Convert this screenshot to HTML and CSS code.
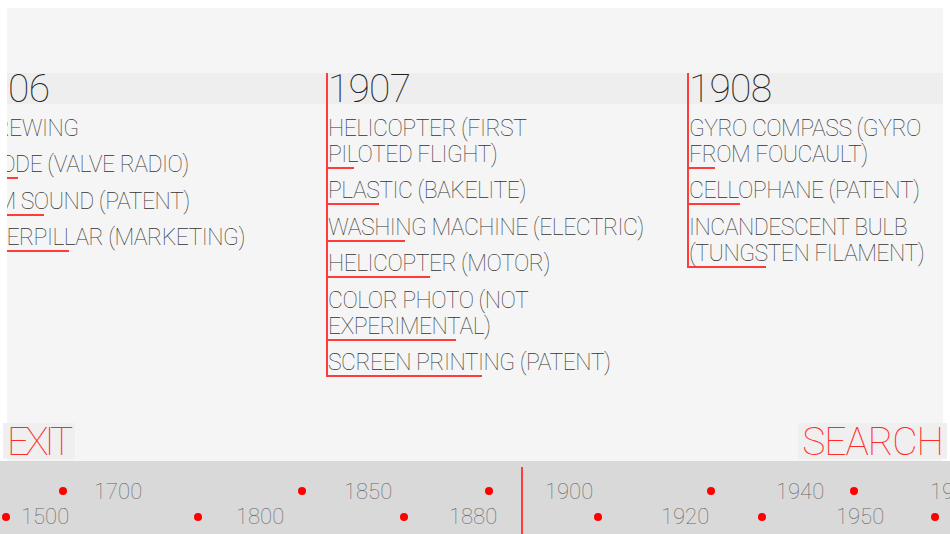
FILE: index.html
```html
<!DOCTYPE html>
<html lang="en">
<head>
    <meta charset="UTF-8">
    <meta name="viewport" content="width=device-width, initial-scale=1.0">
    <title>Inventions Timeline</title>
    <link rel="stylesheet" href="styles.css">
</head>
<body>
    <div class="screen">
        <!-- Year board -->
        <main class="board">
            <div class="columns">
                <section class="year-col">
                    <h2 class="year-title">1906</h2>
                    <ul class="items">
                        <li class="item"><span class="item-text">SCREWING</span><span class="item-bar" style="width: 26px"></span></li>
                        <li class="item"><span class="item-text">TRIODE (VALVE RADIO)</span><span class="item-bar" style="width: 51px"></span></li>
                        <li class="item"><span class="item-text">FILM SOUND (PATENT)</span><span class="item-bar" style="width: 77px"></span></li>
                        <li class="item"><span class="item-text">CATERPILLAR (MARKETING)</span><span class="item-bar" style="width: 102px"></span></li>
                    </ul>
                </section>
                <section class="year-col">
                    <h2 class="year-title">1907</h2>
                    <ul class="items">
                        <li class="item"><span class="item-text">HELICOPTER (FIRST<br>PILOTED FLIGHT)</span><span class="item-bar" style="width: 26px"></span></li>
                        <li class="item"><span class="item-text">PLASTIC (BAKELITE)</span><span class="item-bar" style="width: 51px"></span></li>
                        <li class="item"><span class="item-text">WASHING MACHINE (ELECTRIC)</span><span class="item-bar" style="width: 77px"></span></li>
                        <li class="item"><span class="item-text">HELICOPTER (MOTOR)</span><span class="item-bar" style="width: 102px"></span></li>
                        <li class="item"><span class="item-text">COLOR PHOTO (NOT<br>EXPERIMENTAL)</span><span class="item-bar" style="width: 128px"></span></li>
                        <li class="item"><span class="item-text">SCREEN PRINTING (PATENT)</span><span class="item-bar" style="width: 154px"></span></li>
                    </ul>
                </section>
                <section class="year-col">
                    <h2 class="year-title">1908</h2>
                    <ul class="items">
                        <li class="item"><span class="item-text">GYRO COMPASS (GYRO<br>FROM FOUCAULT)</span><span class="item-bar" style="width: 26px"></span></li>
                        <li class="item"><span class="item-text">CELLOPHANE (PATENT)</span><span class="item-bar" style="width: 51px"></span></li>
                        <li class="item"><span class="item-text">INCANDESCENT BULB<br>(TUNGSTEN FILAMENT)</span><span class="item-bar" style="width: 77px"></span></li>
                    </ul>
                </section>
            </div>
        </main>

        <!-- Buttons -->
        <div class="controls">
            <a href="#" class="ctrl-btn exit-btn">EXIT</a>
            <a href="#" class="ctrl-btn">SEARCH</a>
        </div>

        <!-- Timeline scrubber -->
        <footer class="timeline">
            <span class="dot top" style="left: 59px"></span>
            <span class="dot top" style="left: 298px"></span>
            <span class="dot top" style="left: 485px"></span>
            <span class="dot top" style="left: 707px"></span>
            <span class="dot top" style="left: 850px"></span>
            <span class="dot bottom" style="left: 2px"></span>
            <span class="dot bottom" style="left: 194px"></span>
            <span class="dot bottom" style="left: 400px"></span>
            <span class="dot bottom" style="left: 594px"></span>
            <span class="dot bottom" style="left: 758px"></span>
            <span class="dot bottom" style="left: 931px"></span>

            <span class="tick top" style="left: 94px">1700</span>
            <span class="tick top" style="left: 344px">1850</span>
            <span class="tick top" style="left: 545px">1900</span>
            <span class="tick top" style="left: 776px">1940</span>
            <span class="tick top" style="left: 930px">1960</span>
            <span class="tick bottom" style="left: 21px">1500</span>
            <span class="tick bottom" style="left: 236px">1800</span>
            <span class="tick bottom" style="left: 449px">1880</span>
            <span class="tick bottom" style="left: 661px">1920</span>
            <span class="tick bottom" style="left: 836px">1950</span>

            <span class="cursor"></span>
        </footer>
    </div>
</body>
</html>
```

FILE: styles.css
```css
* {
    margin: 0;
    padding: 0;
    box-sizing: border-box;
}

body {
    font-family: Roboto, "Helvetica Neue", "Liberation Sans", sans-serif;
    font-weight: 100;
    background-color: #ffffff;
    width: 950px;
    height: 534px;
    overflow: hidden;
}

.screen {
    position: relative;
    height: 534px;
    display: flex;
    flex-direction: column;
}

/* Board */
.board {
    margin: 8px 7px 0 7px;
    height: 453px;
    background-color: #f5f5f5;
    overflow: hidden;
    padding-top: 65px;
}

.columns {
    display: flex;
    align-items: flex-start;
    margin-left: -42px;
}

.year-col {
    flex: 0 0 361px;
    border-left: 2px solid #ff3b3b;
}

.year-title {
    height: 31px;
    background-color: #eeeeee;
    font-size: 39px;
    font-weight: 100;
    line-height: 33px;
    letter-spacing: -0.8px;
    color: #222222;
    white-space: nowrap;
}

.items {
    list-style: none;
    padding-top: 2px;
}

.item {
    padding-top: 9.5px;
}

.item-text {
    display: block;
    font-size: 23px;
    line-height: 26px;
    letter-spacing: -0.5px;
    color: #333333;
    white-space: nowrap;
}

.item-bar {
    display: block;
    height: 2px;
    margin-top: -1px;
    background-color: #ff3b3b;
}

/* Buttons */
.controls {
    position: absolute;
    top: 423px;
    left: 3px;
    right: 3px;
    display: flex;
    justify-content: space-between;
}

.ctrl-btn {
    height: 36px;
    padding: 0 4px;
    background-color: #efefef;
    color: #ff2b2b;
    font-size: 39px;
    font-weight: 100;
    line-height: 38px;
    letter-spacing: -1px;
    text-decoration: none;
}

.exit-btn {
    letter-spacing: -4px;
    padding-right: 6px;
}

/* Timeline */
.timeline {
    position: relative;
    height: 73px;
    background-color: #d9d9d9;
    overflow: hidden;
}

.dot {
    position: absolute;
    width: 8px;
    height: 8px;
    border-radius: 50%;
    background-color: #ff0000;
}

.dot.top {
    top: 26px;
}

.dot.bottom {
    top: 52px;
}

.tick {
    position: absolute;
    font-size: 22px;
    line-height: 22px;
    color: #666666;
    white-space: nowrap;
}

.tick.top {
    top: 20px;
}

.tick.bottom {
    top: 45px;
}

.cursor {
    position: absolute;
    left: 521px;
    top: 6px;
    bottom: 0;
    width: 2px;
    background-color: #ff3b3b;
}
```
